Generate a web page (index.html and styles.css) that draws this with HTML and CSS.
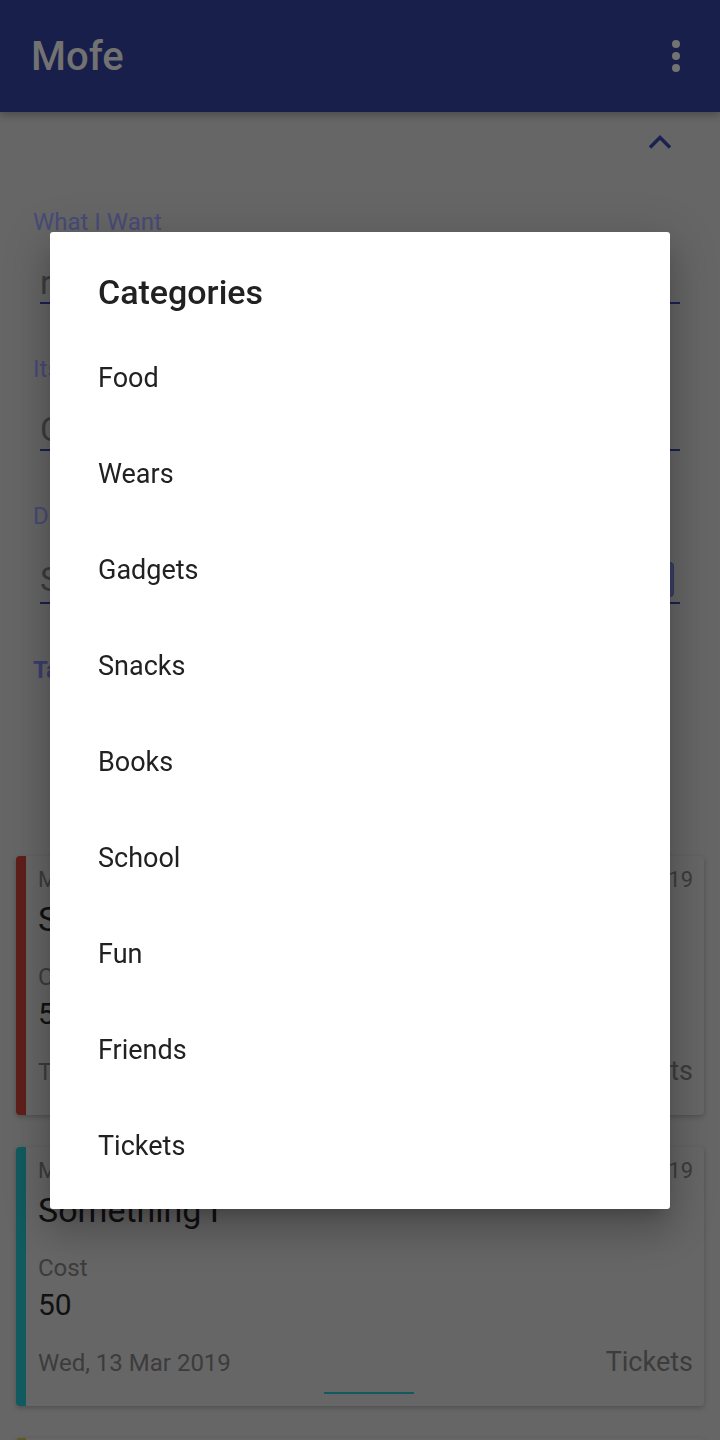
FILE: index.html
```html
<!DOCTYPE html>
<html lang="en">
<head>
<meta charset="utf-8">
<title>Mofe</title>
<link rel="stylesheet" href="styles.css">
</head>
<body>
<div class="app">
  <header class="appbar">
    <div class="appbar-title">Mofe</div>
    <div class="overflow" aria-label="More options">
      <span class="dot"></span><span class="dot"></span><span class="dot"></span>
    </div>
  </header>

  <main class="content">
    <div class="collapse-row">
      <svg class="chevron" width="24" height="14" viewBox="0 0 24 14"><polyline points="2,12.5 12,2.5 22,12.5" fill="none" stroke="currentColor" stroke-width="3.4"/></svg>
    </div>

    <section class="form">
      <div class="field">
        <div class="field-label">What I Want</div>
        <div class="field-input">rice and beans for lunch</div>
      </div>
      <div class="field">
        <div class="field-label">Its Cost</div>
        <div class="field-input">Cost of the item</div>
      </div>
      <div class="field">
        <div class="field-label">Date</div>
        <div class="field-input field-input-tall">
          <span>Select date</span>
          <span class="pick-btn"></span>
        </div>
      </div>
      <div class="section-label">Tags</div>
    </section>

    <section class="cards">
      <article class="card card-red">
        <div class="card-row top">
          <span class="card-small">My Want</span>
          <span class="card-small">Thu, 14 Mar 2019</span>
        </div>
        <div class="card-title">Something</div>
        <div class="card-cost-label">Cost</div>
        <div class="card-cost">50</div>
        <div class="card-row bottom">
          <span class="card-date">Thu, 14 Mar 2019</span>
          <span class="card-cat">Tickets</span>
        </div>
        <div class="card-bar"><span class="bar-line"></span></div>
      </article>

      <article class="card card-teal">
        <div class="card-row top">
          <span class="card-small">My Want</span>
          <span class="card-small">Wed, 13 Mar 2019</span>
        </div>
        <div class="card-title">Something I</div>
        <div class="card-cost-label">Cost</div>
        <div class="card-cost">50</div>
        <div class="card-row bottom">
          <span class="card-date">Wed, 13 Mar 2019</span>
          <span class="card-cat">Tickets</span>
        </div>
        <div class="card-bar"><span class="bar-line"></span></div>
      </article>

      <article class="card card-yellow"></article>
    </section>
  </main>
</div>

<div class="scrim">
  <div class="dialog" role="dialog" aria-label="Categories">
    <h2 class="dialog-title">Categories</h2>
    <ul class="dialog-list">
      <li>Food</li>
      <li>Wears</li>
      <li>Gadgets</li>
      <li>Snacks</li>
      <li>Books</li>
      <li>School</li>
      <li>Fun</li>
      <li>Friends</li>
      <li>Tickets</li>
    </ul>
  </div>
</div>
</body>
</html>
```

FILE: styles.css
```css
* { box-sizing: border-box; }

html, body {
  margin: 0;
  padding: 0;
}

body {
  width: 720px;
  height: 1440px;
  overflow: hidden;
  background: #666666;
  font-family: Roboto, "Noto Sans", "Liberation Sans", sans-serif;
}

.app {
  width: 720px;
}

.appbar {
  height: 112px;
  background: #191f4b;
  display: flex;
  align-items: center;
  justify-content: space-between;
  padding: 0 40px 0 31px;
  box-shadow: 0 3px 8px rgba(0, 0, 0, 0.28);
  position: relative;
  z-index: 1;
}

.appbar-title {
  color: #727272;
  font-size: 40px;
  font-weight: 500;
}

.overflow {
  display: flex;
  flex-direction: column;
  gap: 4px;
}

.dot {
  width: 8px;
  height: 8px;
  border-radius: 50%;
  background: #737373;
}

/* Collapse row */
.collapse-row {
  height: 60px;
  display: flex;
  align-items: center;
  justify-content: flex-end;
  padding-right: 48px;
}

.chevron {
  color: #1b2150;
  display: block;
}

/* Form */
.form {
  padding: 0 40px 0 33px;
}

.field {
  margin-top: 51px;
}

.field:first-child {
  margin-top: 36px;
}

.field-label {
  font-size: 24px;
  line-height: 28px;
  color: #474b78;
}

.field-input {
  margin: 26px 0 0 7px;
  height: 42px;
  line-height: 40px;
  font-size: 34px;
  color: #3c3c3c;
  border-bottom: 2px solid #1b2150;
  white-space: nowrap;
  overflow: hidden;
}

.field-input-tall {
  height: 48px;
  display: flex;
  align-items: center;
  justify-content: space-between;
  padding-right: 6px;
}

.pick-btn {
  width: 110px;
  height: 35px;
  border-radius: 4px;
  background: #3b3f68;
  border: 1px solid #33375c;
}

.section-label {
  margin-top: 52px;
  font-size: 24px;
  line-height: 28px;
  font-weight: 700;
  color: #3a3e6e;
}

/* Cards */
.cards {
  margin-top: 172px;
  padding: 0 16px;
  display: flex;
  flex-direction: column;
  gap: 32px;
}

.card {
  height: 259px;
  background: #666666;
  border-left: 10px solid #5f1f1a;
  border-radius: 4px;
  padding: 11px 11px 0 12px;
  box-shadow: 0 2px 5px rgba(0, 0, 0, 0.22);
  display: flex;
  flex-direction: column;
  flex-shrink: 0;
}

.card-red { border-left-color: #5f1f1a; }
.card-teal { border-left-color: #115a60; }
.card-yellow { border-left-color: #5e5a22; }

.card-row {
  display: flex;
  justify-content: space-between;
  align-items: baseline;
}

.card-small {
  font-size: 22px;
  line-height: 26px;
  color: #3c3c3c;
}

.card-title {
  margin-top: 6px;
  font-size: 34px;
  line-height: 40px;
  color: #101010;
  white-space: nowrap;
}

.card-cost-label {
  margin-top: 24px;
  font-size: 24px;
  line-height: 28px;
  color: #3c3c3c;
}

.card-cost {
  margin-top: 5px;
  font-size: 30px;
  line-height: 36px;
  color: #111111;
}

.card-row.bottom {
  margin-top: 25px;
}

.card-date {
  font-size: 24px;
  line-height: 28px;
  color: #3c3c3c;
}

.card-cat {
  font-size: 27px;
  line-height: 28px;
  color: #3c3c3c;
}

.card-bar {
  margin-top: 15px;
  display: flex;
  justify-content: center;
  padding-left: 6px;
}

.bar-line {
  width: 90px;
  height: 2px;
  background: #115a60;
}

/* Scrim + dialog */
.scrim {
  position: fixed;
  inset: 0;
  display: flex;
  align-items: center;
  justify-content: center;
  z-index: 10;
}

.dialog {
  width: 620px;
  background: #ffffff;
  border-radius: 3px;
  padding: 40px 0 15px;
  box-shadow: 0 11px 15px -7px rgba(0, 0, 0, 0.2),
              0 24px 38px 3px rgba(0, 0, 0, 0.14),
              0 9px 46px 8px rgba(0, 0, 0, 0.12);
}

.dialog-title {
  margin: 0 0 17px;
  padding: 0 48px;
  font-size: 34px;
  line-height: 41px;
  font-weight: 500;
  color: #212121;
}

.dialog-list {
  list-style: none;
  margin: 0;
  padding: 0;
}

.dialog-list li {
  height: 96px;
  line-height: 96px;
  padding-left: 48px;
  font-size: 27px;
  color: #212121;
}
```
